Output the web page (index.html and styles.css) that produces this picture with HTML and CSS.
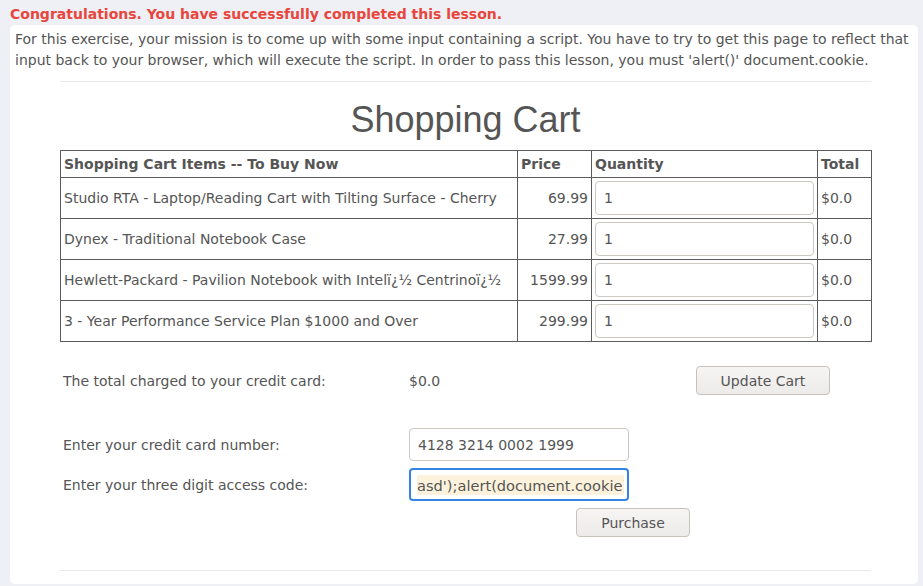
FILE: index.html
```html
<!DOCTYPE html>
<html>
<head>
<meta charset="utf-8">
<title>Shopping Cart</title>
<link rel="stylesheet" href="styles.css">
</head>
<body>
<div class="success">Congratulations. You have successfully completed this lesson.</div>
<div class="panel">
  <p class="intro">For this exercise, your mission is to come up with some input containing a script. You have to try to get this page to reflect that input back to your browser, which will execute the script. In order to pass this lesson, you must 'alert()' document.cookie.</p>
  <div class="content">
    <hr class="rule">
    <h1 class="title">Shopping Cart</h1>
    <table class="cart">
      <colgroup>
        <col class="c-item"><col class="c-price"><col class="c-qty"><col class="c-total">
      </colgroup>
      <thead>
        <tr><th>Shopping Cart Items -- To Buy Now</th><th>Price</th><th>Quantity</th><th>Total</th></tr>
      </thead>
      <tbody>
        <tr><td>Studio RTA - Laptop/Reading Cart with Tilting Surface - Cherry</td><td class="num">69.99</td><td><input class="field" type="text" value="1"></td><td>$0.0</td></tr>
        <tr><td>Dynex - Traditional Notebook Case</td><td class="num">27.99</td><td><input class="field" type="text" value="1"></td><td>$0.0</td></tr>
        <tr><td>Hewlett-Packard - Pavilion Notebook with Intelï¿½ Centrinoï¿½</td><td class="num">1599.99</td><td><input class="field" type="text" value="1"></td><td>$0.0</td></tr>
        <tr><td>3 - Year Performance Service Plan $1000 and Over</td><td class="num">299.99</td><td><input class="field" type="text" value="1"></td><td>$0.0</td></tr>
      </tbody>
    </table>
    <div class="checkout">
      <div class="label row1">The total charged to your credit card:</div>
      <div class="value row1">$0.0</div>
      <div class="btncell row1"><button class="btn btn-update" type="button">Update Cart</button></div>
      <div class="spacer"></div>
      <div class="label row2">Enter your credit card number:</div>
      <div class="value row2"><input class="field card" type="text" value="4128 3214 0002 1999"></div>
      <div class="label row3">Enter your three digit access code:</div>
      <div class="value row3"><input class="field card focused" type="text" value="asd');alert(document.cookie);('"></div>
      <div class="purchase"><button class="btn btn-purchase" type="button">Purchase</button></div>
    </div>
    <hr class="rule bottom">
  </div>
</div>
</body>
</html>
```
FILE: styles.css
```css
html, body {
  margin: 0;
  padding: 0;
  background: #eff0f5;
  font-family: "DejaVu Sans", "Noto Sans", sans-serif;
  font-size: 14px;
  color: #555;
}

.success {
  height: 25px;
  box-sizing: border-box;
  padding: 4px 10px 0;
  line-height: 21px;
  font-weight: bold;
  font-size: 14px;
  color: #e8453c;
}

.panel {
  margin: 0 5px 0 10px;
  height: 559px;
  box-sizing: border-box;
  background: #fff;
  border-radius: 5px;
  padding: 4px 5px 0;
}

.intro {
  margin: 0;
  line-height: 21px;
}

.content {
  margin: 0 0 0 45px;
  width: 811px;
}

.rule {
  margin: 10px 0 0;
  border: 0;
  border-top: 1px solid #e8e8e8;
  height: 0;
}

.rule.bottom {
  margin-top: 33px;
}

.title {
  margin: 17px 0 0;
  font-family: "Liberation Sans", Arial, sans-serif;
  font-weight: normal;
  font-size: 36px;
  line-height: 42px;
  text-align: center;
  color: #555;
}

.cart {
  margin-top: 9px;
  width: 811px;
  table-layout: fixed;
  border-collapse: collapse;
  border: 1px solid #5b5b5b;
}

.c-item { width: 457px; }
.c-price { width: 74px; }
.c-qty { width: 226px; }
.c-total { width: 54px; }

.cart th, .cart td {
  border: 1px solid #5b5b5b;
  padding: 3px;
  line-height: 20px;
  text-align: left;
  vertical-align: middle;
  white-space: nowrap;
  overflow: hidden;
}

.cart th {
  font-weight: bold;
}

.cart td.num {
  text-align: right;
}

.field {
  display: block;
  box-sizing: border-box;
  width: 100%;
  height: 34px;
  margin: 0;
  padding: 0 8px;
  border: 1px solid #cdc8c2;
  border-radius: 4px;
  background: #fff;
  font-family: "DejaVu Sans", sans-serif;
  font-size: 14px;
  color: #555;
  outline: none;
}

.checkout {
  display: grid;
  grid-template-columns: 346px 260px 194px;
  grid-template-rows: 29px 19px 33px 33px 29px;
  row-gap: 7px;
  margin-top: 24px;
  align-items: center;
}

.label {
  grid-column: 1;
  padding-left: 3px;
}

.value {
  grid-column: 2;
  padding-left: 3px;
}

.row1 { grid-row: 1; }
.spacer { grid-row: 2; grid-column: 1 / 4; }
.row2 { grid-row: 3; }
.row3 { grid-row: 4; }

.btncell {
  grid-column: 3;
  display: flex;
  justify-content: center;
}

.card {
  width: 220px;
  height: 33px;
}

.focused {
  border: 2px solid #3584e4;
  padding: 5px 3px 4px 6px;
  background-color: #fdf3dc;
  background-clip: content-box;
  font-size: 14.6px;
}

.purchase {
  grid-row: 5;
  grid-column: 2 / 4;
  display: flex;
  justify-content: center;
}

.btn {
  height: 29px;
  box-sizing: border-box;
  border: 1px solid #c8c2bc;
  border-radius: 4px;
  background: linear-gradient(#f6f5f4, #edebe9);
  font-family: "DejaVu Sans", sans-serif;
  font-size: 14px;
  color: #555;
  padding: 0;
}

.btn-update { width: 134px; }
.btn-purchase { width: 114px; }
```
